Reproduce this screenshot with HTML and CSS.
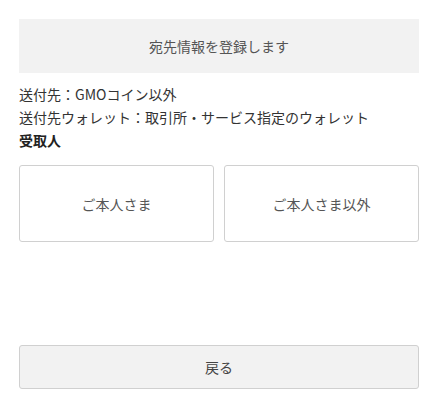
FILE: index.html
```html
<!DOCTYPE html>
<html lang="ja">
<head>
<meta charset="utf-8">
<link rel="stylesheet" href="styles.css">
</head>
<body>
<div class="page">
  <div class="header">宛先情報を登録します</div>
  <div class="info">
    <p class="line">送付先：GMOコイン以外</p>
    <p class="line">送付先ウォレット：取引所・サービス指定のウォレット</p>
    <p class="line label">受取人</p>
  </div>
  <div class="choices">
    <button class="choice">ご本人さま</button>
    <button class="choice">ご本人さま以外</button>
  </div>
  <button class="back">戻る</button>
</div>
</body>
</html>
```
FILE: styles.css
```css
html, body {
  margin: 0;
  padding: 0;
  background: #fff;
}
body {
  font-family: "Noto Sans CJK JP", "Noto Sans", sans-serif;
  font-size: 14px;
  color: #333;
}
.page {
  padding: 19px 20px 0 19px;
  display: flex;
  flex-direction: column;
}
.header {
  height: 54px;
  background: #f2f2f2;
  color: #555;
  display: flex;
  align-items: center;
  justify-content: center;
  font-size: 14px;
}
.info {
  margin-top: 10px;
}
.line {
  margin: 0;
  line-height: 23px;
}
.label {
  font-weight: bold;
  color: #222;
}
.choices {
  margin-top: 13px;
  display: grid;
  grid-template-columns: 1fr 1fr;
  gap: 10px;
}
.choice {
  height: 77px;
  background: #fff;
  border: 1px solid #d0d0d0;
  border-radius: 3px;
  font-family: inherit;
  font-size: 14px;
  color: #555;
  padding: 0;
}
.back {
  margin-top: 103px;
  height: 44px;
  background: #f2f2f2;
  border: 1px solid #d0d0d0;
  border-radius: 3px;
  font-family: inherit;
  font-size: 14px;
  color: #444;
  padding: 0;
}
```
